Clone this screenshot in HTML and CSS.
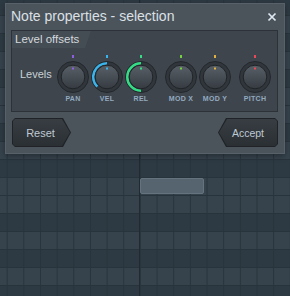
FILE: index.html
```html
<!doctype html>
<html>
<head>
<meta charset="utf-8">
<title>Note properties</title>
<link rel="stylesheet" href="styles.css">
</head>
<body>
<!-- note on the piano roll behind the dialog -->
<div class="note"></div>

<div class="dialog">
	<div class="titlebar">
		<span class="title">Note properties - selection</span>
		<svg class="close" width="10" height="10" viewBox="0 0 10 10">
			<path d="M1.5 1.5 L8.5 8.5 M8.5 1.5 L1.5 8.5" stroke="#dfe8f1" stroke-width="1.7"/>
		</svg>
	</div>

	<div class="panel">
		<div class="tab">Level offsets</div>
		<div class="levels">
			<span class="levels-label">Levels</span>

			<div class="knob">
				<svg width="34" height="39" viewBox="0 0 34 39">
					<defs>
						<linearGradient id="kg" x1="0" y1="0" x2="0" y2="1">
							<stop offset="0" stop-color="#586067"/>
							<stop offset="1" stop-color="#353b41"/>
						</linearGradient>
					</defs>
					<rect x="16" y="0" width="2" height="3" fill="#8b5fe0"/>
					<circle cx="17" cy="22" r="15.5" fill="#30363b" stroke="#23282c"/>
					<circle cx="17" cy="22" r="11.8" fill="url(#kg)" stroke="#202428"/>
					<rect x="16" y="12.5" width="2" height="2" fill="#8b5fe0"/>
				</svg>
				<span class="knob-label">PAN</span>
			</div>

			<div class="knob">
				<svg width="34" height="39" viewBox="0 0 34 39">
					<rect x="16" y="0" width="2" height="3" fill="#3ab4ec"/>
					<circle cx="17" cy="22" r="15.5" fill="#30363b" stroke="#23282c"/>
					<path d="M17 8.3 A13.7 13.7 0 0 0 7.3 31.7" fill="none" stroke="#3ab4ec" stroke-width="2.6"/>
					<circle cx="17" cy="22" r="11.8" fill="url(#kg)" stroke="#202428"/>
					<rect x="16" y="12.5" width="2" height="2" fill="#3ab4ec"/>
				</svg>
				<span class="knob-label">VEL</span>
			</div>

			<div class="knob">
				<svg width="34" height="39" viewBox="0 0 34 39">
					<rect x="16" y="0" width="2" height="3" fill="#34dc86"/>
					<circle cx="17" cy="22" r="15.5" fill="#30363b" stroke="#23282c"/>
					<path d="M17 8.3 A13.7 13.7 0 0 0 17 35.7" fill="none" stroke="#34dc86" stroke-width="2.6"/>
					<circle cx="17" cy="22" r="11.8" fill="url(#kg)" stroke="#202428"/>
					<rect x="16" y="12.5" width="2" height="2" fill="#34dc86"/>
				</svg>
				<span class="knob-label">REL</span>
			</div>

			<div class="knob gap">
				<svg width="34" height="39" viewBox="0 0 34 39">
					<rect x="16" y="0" width="2" height="3" fill="#74d040"/>
					<circle cx="17" cy="22" r="15.5" fill="#30363b" stroke="#23282c"/>
					<circle cx="17" cy="22" r="11.8" fill="url(#kg)" stroke="#202428"/>
					<rect x="16" y="12.5" width="2" height="2" fill="#74d040"/>
				</svg>
				<span class="knob-label">MOD X</span>
			</div>

			<div class="knob">
				<svg width="34" height="39" viewBox="0 0 34 39">
					<rect x="16" y="0" width="2" height="3" fill="#e0b040"/>
					<circle cx="17" cy="22" r="15.5" fill="#30363b" stroke="#23282c"/>
					<circle cx="17" cy="22" r="11.8" fill="url(#kg)" stroke="#202428"/>
					<rect x="16" y="12.5" width="2" height="2" fill="#e0b040"/>
				</svg>
				<span class="knob-label">MOD Y</span>
			</div>

			<div class="knob gap">
				<svg width="34" height="39" viewBox="0 0 34 39">
					<rect x="16" y="0" width="2" height="3" fill="#e84858"/>
					<circle cx="17" cy="22" r="15.5" fill="#30363b" stroke="#23282c"/>
					<circle cx="17" cy="22" r="11.8" fill="url(#kg)" stroke="#202428"/>
					<rect x="16" y="12.5" width="2" height="2" fill="#e84858"/>
				</svg>
				<span class="knob-label">PITCH</span>
			</div>
		</div>
	</div>

	<div class="buttons">
		<button class="btn reset"><span>Reset</span></button>
		<button class="btn accept"><span>Accept</span></button>
	</div>
</div>
</body>
</html>
```

FILE: styles.css
```css
body
{
	margin: 0;
	width: 290px;
	height: 296px;
	overflow: hidden;
	position: relative;
	font-family: "Liberation Sans", Arial, sans-serif;
	/* piano roll grid: bar line, beat lines, row lines, key rows */
	background:
		linear-gradient(#1f2a31, #1f2a31) 139px 0 / 1px 100% no-repeat,
		linear-gradient(to right, #28343c 1px, transparent 1px) 6.67px 0 / 16.667px 100%,
		linear-gradient(to bottom, #28343c 1px, transparent 1px) 0 15px / 100% 18px,
		linear-gradient(to bottom,
			#2e3a43 0 18px, #36434d 18px 36px,
			#2e3a43 36px 54px, #36434d 54px 72px,
			#2e3a43 72px 90px, #36434d 90px 126px,
			#2e3a43 126px 144px, #36434d 144px 162px,
			#2e3a43 162px 180px, #36434d 180px 216px) 0 -3px / 100% 216px;
}

.note
{
	position: absolute;
	left: 140px;
	top: 178px;
	width: 64px;
	height: 16px;
	box-sizing: border-box;
	background-color: #56646f;
	border: 1px solid #65737e;
	border-radius: 2px;
}

/* dialog */
.dialog
{
	position: absolute;
	left: 5px;
	top: 3px;
	width: 280px;
	box-sizing: border-box;
	padding: 0 6px 6px 5px;
	background-color: #4b535b;
	border: 1px solid #586169;
	box-shadow: 0 2px 6px rgba(0, 0, 0, 0.35);
}
.titlebar
{
	display: flex;
	justify-content: space-between;
	align-items: flex-start;
	height: 26px;
}
.title
{
	font-size: 14px;
	line-height: 24px;
	color: #dbe0e5;
}
.close
{
	margin-top: 8px;
	margin-right: 1px;
}

/* level offsets panel */
.panel
{
	background-color: #3e454c;
	border: 1px solid #2c3237;
	padding-bottom: 8px;
}
.tab
{
	width: 79px;
	height: 17px;
	box-sizing: border-box;
	padding-left: 3px;
	font-size: 11.5px;
	line-height: 17px;
	color: #d3d8dd;
	background-color: #454d54;
	clip-path: polygon(0 0, 100% 0, calc(100% - 6px) 100%, 0 100%);
}
.levels
{
	display: flex;
	margin-top: 7px;
}
.levels-label
{
	width: 44px;
	box-sizing: border-box;
	padding-left: 8px;
	margin-top: 13px;
	font-size: 11px;
	line-height: 13px;
	color: #c9d0d6;
}
.knob
{
	width: 34px;
	display: flex;
	flex-direction: column;
	align-items: center;
}
.knob svg
{
	display: block;
}
.knob.gap
{
	margin-left: 6px;
}
.knob-label
{
	margin-top: 1px;
	font-size: 7px;
	font-weight: bold;
	line-height: 8px;
	letter-spacing: 0.3px;
	color: #93aac0;
	white-space: nowrap;
}

/* bottom buttons */
.buttons
{
	display: flex;
	justify-content: space-between;
	margin-top: 6px;
	padding-left: 1px;
}
.btn
{
	position: relative;
	height: 29px;
	padding: 0;
	border: none;
	background-color: #1f2327;
	font-family: "Liberation Sans", Arial, sans-serif;
	font-size: 11px;
	color: #bfc9d3;
}
.btn::before
{
	content: "";
	position: absolute;
	top: 1px;
	left: 1px;
	right: 1px;
	bottom: 1px;
	background: linear-gradient(#373d42, #2b3034);
}
.btn span
{
	position: relative;
}
.reset
{
	width: 59px;
	padding-right: 2px;
	clip-path: polygon(3px 0, 51px 0, 59px 50%, 51px 100%, 3px 100%, 0 26px, 0 3px);
}
.reset::before
{
	clip-path: polygon(2px 0, 49px 0, 57px 50%, 49px 100%, 2px 100%, 0 25px, 0 2px);
}
.accept
{
	width: 60px;
	font-size: 10.5px;
	clip-path: polygon(0 50%, 8px 0, 57px 0, 60px 3px, 60px 26px, 57px 100%, 8px 100%);
}
.accept::before
{
	clip-path: polygon(0 50%, 8px 0, 56px 0, 58px 2px, 58px 25px, 56px 100%, 8px 100%);
}
```
